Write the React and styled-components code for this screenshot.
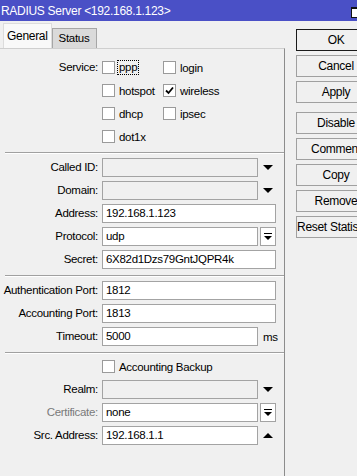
import React from 'react';
import styled, { createGlobalStyle } from 'styled-components';

const GlobalStyle = createGlobalStyle`
  html, body {
    margin: 0;
    padding: 0;
    background: #f0f0f0;
  }
  body {
    font-family: "Liberation Sans", Arial, sans-serif;
    font-size: 11.5px;
    letter-spacing: -0.3px;
    color: #000;
  }
`;

const Window = styled.div`
  width: 357px;
  height: 476px;
  overflow: hidden;
  display: flex;
  flex-direction: column;
  background: #f0f0f0;
`;

const TitleBar = styled.div`
  height: 21px;
  flex: none;
  background: #4a50c6;
  color: #fff;
  display: flex;
  align-items: center;
  justify-content: space-between;
  padding-left: 1px;
  font-size: 12px;
`;

const WinIcon = styled.span`
  width: 11px;
  height: 11px;
  margin-right: -5px;
  margin-top: 4px;
  border: 1px solid #111;
  border-top-width: 2px;
  background: #fff;
  box-sizing: border-box;
`;

const Body = styled.div`
  flex: 1;
  display: flex;
`;

const Main = styled.div`
  width: 285px;
  flex: none;
  display: flex;
  flex-direction: column;
`;

const TabBar = styled.div`
  height: 27px;
  display: flex;
  align-items: flex-end;
  padding-left: 3px;
`;

const Tab = styled.div`
  height: ${p => (p.$active ? 25 : 20)}px;
  box-sizing: border-box;
  padding: ${p => (p.$active ? '5px 3px 0 3px' : '3px 7px 0 6px')};
  background: ${p => (p.$active ? '#f9f9f9' : '#dadada')};
  border: 1px solid ${p => (p.$active ? '#dcdcdc' : '#a6a6a6')};
  border-bottom: none;
  font-size: ${p => (p.$active ? 12 : 11.5)}px;
`;

const Panel = styled.div`
  flex: 1;
  border-top: 1px solid #cfcfcf;
  border-right: 1px solid #8c8c8c;
  padding-top: 7px;
`;

const Separator = styled.div`
  margin: ${p => (p.$last ? '4px 0 1px 5px' : '4px 0 2px 5px')};
  border-top: 1px solid #a0a0a0;
  border-bottom: 1px solid #fff;
`;

const Row = styled.div`
  display: grid;
  grid-template-columns: 102px 1fr;
  align-items: ${p => (p.$top ? 'start' : 'center')};
  min-height: 23px;
  padding-right: 8px;
`;

const Label = styled.div`
  text-align: right;
  padding-right: 4px;
  white-space: nowrap;
  line-height: 23px;
  color: ${p => (p.$disabled ? '#7a7a7a' : '#000')};
`;

const CheckGrid = styled.div`
  display: grid;
  grid-template-columns: 61px 61px;
  grid-auto-rows: 23px;
`;

const CheckItem = styled.label`
  display: flex;
  align-items: center;
  gap: 4px;
  white-space: nowrap;
`;

const Box = styled.span`
  width: 13px;
  height: 13px;
  box-sizing: border-box;
  border: 1px solid #9a9a9a;
  background: #fff;
  display: inline-flex;
  align-items: center;
  justify-content: center;
  flex: none;
`;

const Focus = styled.span`
  outline: 1px dotted #000;
  outline-offset: 0;
  padding: 0 1px;
  margin-left: -1px;
  line-height: 13px;
`;

const Field = styled.div`
  display: flex;
  align-items: center;
  height: 23px;
`;

const Input = styled.div`
  flex: 1;
  height: 19px;
  box-sizing: border-box;
  border: 1px solid #a3a3a3;
  background: ${p => (p.$disabled ? '#f0f0f0' : '#fff')};
  padding-left: 3px;
  line-height: 17px;
  white-space: nowrap;
  overflow: hidden;
`;

const Trail = styled.div`
  width: 18px;
  flex: none;
  display: flex;
  align-items: center;
  justify-content: center;
  padding-left: 2px;
  box-sizing: border-box;
`;

const DropButton = styled.div`
  width: 16px;
  height: 19px;
  margin-left: 2px;
  box-sizing: border-box;
  border: 1px solid #a3a3a3;
  background: #fff;
  display: flex;
  align-items: center;
  justify-content: center;
  flex: none;
`;

const Unit = styled.div`
  width: 18px;
  flex: none;
  padding-left: 5px;
  box-sizing: border-box;
`;

const Side = styled.div`
  flex: 1;
  padding: 8px 0 0 11px;
  display: flex;
  flex-direction: column;
  gap: 4px;
  overflow: hidden;
`;

const Button = styled.div`
  width: 80px;
  height: 22px;
  flex: none;
  box-sizing: border-box;
  border: 1px solid ${p => (p.$default ? '#1a1a1a' : '#a0a0a0')};
  background: #f0f0f0;
  display: flex;
  align-items: center;
  justify-content: center;
  white-space: nowrap;
  overflow: hidden;
  font-size: 12px;
  margin-bottom: ${p => (p.$gapAfter ? '5px' : '0')};
`;

const Down = () => (
  <svg width="10" height="6" viewBox="0 0 10 6">
    <polygon points="0,0 10,0 5,5" fill="#000" />
  </svg>
);

const Up = () => (
  <svg width="10" height="6" viewBox="0 0 10 6">
    <polygon points="0,5 10,5 5,0" fill="#000" />
  </svg>
);

const DropIcon = () => (
  <svg width="8" height="8" viewBox="0 0 8 8">
    <rect x="0" y="0" width="8" height="1" fill="#000" />
    <polygon points="0,3 8,3 4,7" fill="#000" />
  </svg>
);

const Tick = () => (
  <svg width="9" height="9" viewBox="0 0 9 9">
    <polyline points="1,4.5 3.5,7 8,1.5" fill="none" stroke="#000" strokeWidth="1.8" />
  </svg>
);

const Check = ({ checked, focus, children }) => (
  <CheckItem>
    <Box>{checked && <Tick />}</Box>
    {focus ? <Focus>{children}</Focus> : <span>{children}</span>}
  </CheckItem>
);

const TextRow = ({ label, value, disabled, labelDisabled, trail }) => (
  <Row>
    <Label $disabled={labelDisabled}>{label}</Label>
    <Field>
      <Input $disabled={disabled}>{value}</Input>
      {trail === 'down' && <Trail><Down /></Trail>}
      {trail === 'up' && <Trail><Up /></Trail>}
      {trail === 'button' && <DropButton><DropIcon /></DropButton>}
      {trail === 'ms' && <Unit>ms</Unit>}
    </Field>
  </Row>
);

const buttons = [
  { text: 'OK', def: true },
  { text: 'Cancel' },
  { text: 'Apply', gap: true },
  { text: 'Disable' },
  { text: 'Comment' },
  { text: 'Copy' },
  { text: 'Remove' },
  { text: 'Reset Statistics' },
];

export default function App() {
  return (
    <>
      <GlobalStyle />
      <Window>
        <TitleBar>
          <span>RADIUS Server &lt;192.168.1.123&gt;</span>
          <WinIcon />
        </TitleBar>
        <Body>
          <Main>
            <TabBar>
              <Tab $active>General</Tab>
              <Tab>Status</Tab>
            </TabBar>
            <Panel>
              <Row $top>
                <Label>Service:</Label>
                <CheckGrid>
                  <Check focus>ppp</Check>
                  <Check>login</Check>
                  <Check>hotspot</Check>
                  <Check checked>wireless</Check>
                  <Check>dhcp</Check>
                  <Check>ipsec</Check>
                  <Check>dot1x</Check>
                </CheckGrid>
              </Row>
              <Separator />
              <TextRow label="Called ID:" disabled trail="down" />
              <TextRow label="Domain:" disabled trail="down" />
              <TextRow label="Address:" value="192.168.1.123" />
              <TextRow label="Protocol:" value="udp" trail="button" />
              <TextRow label="Secret:" value="6X82d1Dzs79GntJQPR4k" />
              <Separator />
              <TextRow label="Authentication Port:" value="1812" />
              <TextRow label="Accounting Port:" value="1813" />
              <TextRow label="Timeout:" value="5000" trail="ms" />
              <Separator $last />
              <Row>
                <Label />
                <Check>Accounting Backup</Check>
              </Row>
              <TextRow label="Realm:" disabled trail="down" />
              <TextRow label="Certificate:" labelDisabled value="none" trail="button" />
              <TextRow label="Src. Address:" value="192.168.1.1" trail="up" />
            </Panel>
          </Main>
          <Side>
            {buttons.map(b => (
              <Button key={b.text} $default={b.def} $gapAfter={b.gap}>
                {b.text}
              </Button>
            ))}
          </Side>
        </Body>
      </Window>
    </>
  );
}
